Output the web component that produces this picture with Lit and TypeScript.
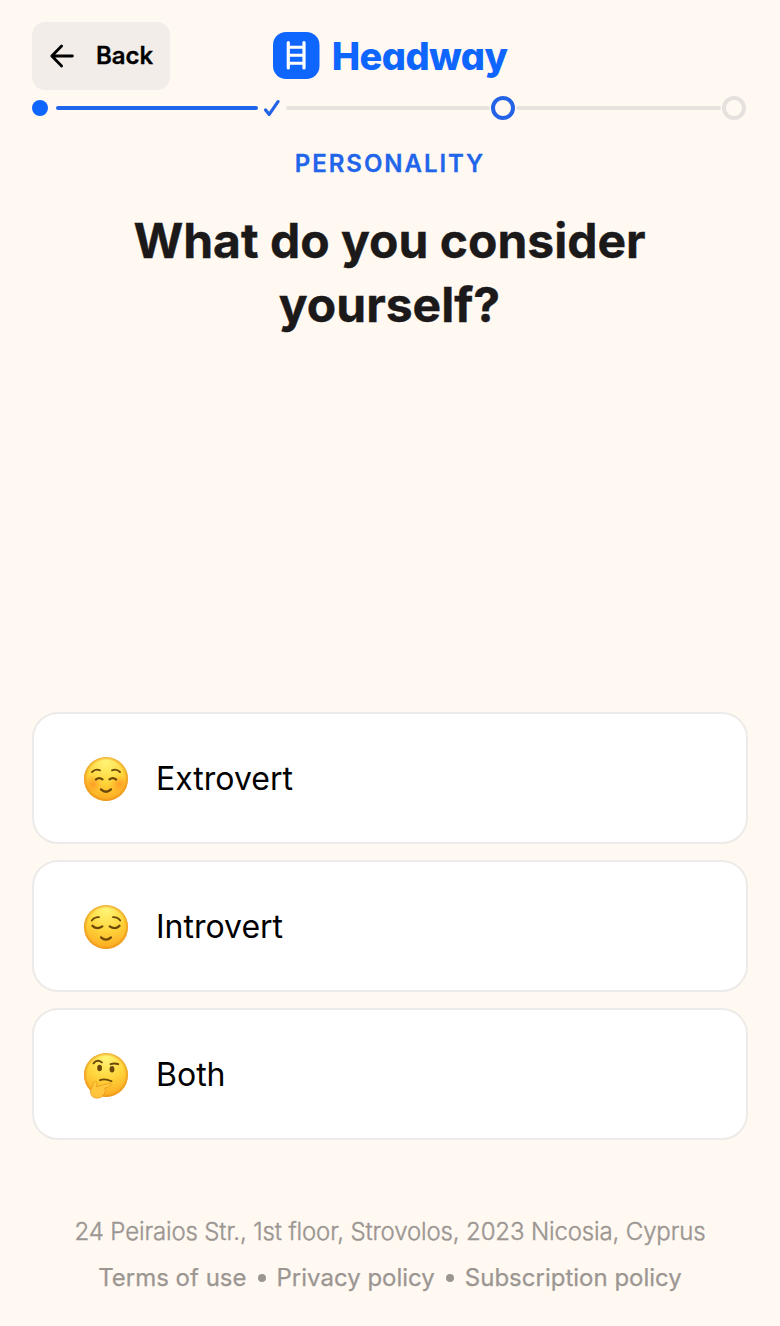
import { LitElement, html, css, svg } from "lit";
import { customElement, property } from "lit/decorators.js";

type Mood = "smile" | "relieved" | "thinking";

const faces = {
  smile: svg`
    <circle cx="9" cy="27" r="9" fill="url(#blush)" />
    <circle cx="35" cy="27" r="9" fill="url(#blush)" />
    <g fill="none" stroke="#6b4708" stroke-linecap="round">
      <path d="M8 15Q11.5 11.4 16 13.3M28 13.3Q32.5 11.4 36 15" stroke-width="1.8" />
      <path d="M11.8 22.6Q15 19.6 18.5 22.4M25.5 22.4Q29 19.6 32.2 22.6" stroke-width="2.2" />
      <path d="M17 32.4Q22 37 27 32.4" stroke-width="2.3" />
    </g>`,
  relieved: svg`
    <g fill="none" stroke="#6b4708" stroke-linecap="round">
      <path d="M7.8 15.5Q10.3 12 15 12.2M29 12.2Q33.7 12 36.2 15.5" stroke-width="1.8" />
      <path d="M8.5 20.8Q13 25 18.3 21.4M25.7 21.4Q31 25 35.5 20.8" stroke-width="2.3" />
      <path d="M17 32.4Q22 36.8 27 32.4" stroke-width="2.3" />
    </g>`,
  thinking: svg`
    <g fill="none" stroke="#6b4708" stroke-linecap="round">
      <path d="M9.5 10.4Q13 5.8 18 9.4" stroke-width="1.8" />
      <path d="M26.5 11.2Q30.5 9.8 34.3 11.2" stroke-width="1.8" />
      <path d="M16 27.2Q21 25.2 27.5 28.3" stroke-width="1.8" />
    </g>
    <ellipse cx="15.6" cy="15" rx="2.4" ry="3.2" fill="#6b4708" />
    <ellipse cx="28" cy="16.3" rx="2.4" ry="3.2" fill="#6b4708" />
    <path d="M9.5 29.5C11 27.4 13.5 28.8 12.8 31.2L12.3 33.8L24.5 30.5C27.5 29.7 28 32.2 25.5 33.2L20.5 35.3C22.5 36 22 38 20.7 38.6C21 40.5 20.2 41.2 19.2 41.7C18 45 14 45.6 10.5 44.7C6.8 43.7 6 40 7 36.5Z"
      fill="url(#hand)" stroke="#e8951c" stroke-width="0.7" />`,
};

@customElement("mood-icon")
export class MoodIcon extends LitElement {
  @property() mood: Mood = "smile";

  static styles = css`
    :host { display: block; width: 46px; height: 46px; }
    svg { display: block; overflow: visible; }
  `;

  render() {
    return html`<svg width="46" height="46" viewBox="-1 -1 46 46" aria-hidden="true">
      <defs>
        <radialGradient id="skin" cx="0.5" cy="0.12" r="0.92">
          <stop offset="0" stop-color="#fff576" />
          <stop offset="0.5" stop-color="#ffd53c" />
          <stop offset="1" stop-color="#fba51c" />
        </radialGradient>
        <radialGradient id="rim">
          <stop offset="0.85" stop-color="#e88d12" stop-opacity="0" />
          <stop offset="1" stop-color="#e38a1b" stop-opacity="0.7" />
        </radialGradient>
        <radialGradient id="blush">
          <stop offset="0" stop-color="#ff7b1a" stop-opacity="0.55" />
          <stop offset="1" stop-color="#ff8a1a" stop-opacity="0" />
        </radialGradient>
        <linearGradient id="hand" x1="0" y1="0" x2="0" y2="1">
          <stop offset="0" stop-color="#ffcb40" />
          <stop offset="1" stop-color="#ffc23a" />
        </linearGradient>
        <clipPath id="head"><circle cx="22" cy="22" r="22" /></clipPath>
      </defs>
      <circle cx="22" cy="22" r="22" fill="url(#skin)" />
      <circle cx="22" cy="22" r="22" fill="url(#rim)" />
      <g clip-path=${this.mood === "smile" ? "url(#head)" : "none"}>${faces[this.mood]}</g>
    </svg>`;
  }
}

@customElement("option-card")
export class OptionCard extends LitElement {
  @property() mood: Mood = "smile";
  @property() label = "";

  static styles = css`
    :host { display: block; }
    .card {
      box-sizing: border-box;
      width: 100%;
      height: 132px;
      display: flex;
      align-items: center;
      gap: 27px;
      padding: 2px 49px 0;
      border: 2px solid #edebe9;
      border-radius: 26px;
      background: #fff;
      color: #000;
      font: 400 32px/40px Inter, sans-serif;
      text-align: left;
    }
  `;

  render() {
    return html`<button class="card">
      <mood-icon .mood=${this.mood}></mood-icon>
      <span>${this.label}</span>
    </button>`;
  }
}

@customElement("app-root")
export class AppRoot extends LitElement {
  static styles = css`
    :host {
      display: block;
      font-family: Inter, sans-serif;
      background: #fff9f2;
    }
    .page {
      box-sizing: border-box;
      height: 1326px;
      padding: 22px 32px 31px;
      display: flex;
      flex-direction: column;
    }
    .header {
      display: grid;
      grid-template-columns: 1fr auto 1fr;
      align-items: center;
      height: 68px;
    }
    .back {
      justify-self: start;
      box-sizing: border-box;
      width: 138px;
      height: 68px;
      display: flex;
      align-items: center;
      gap: 21px;
      padding: 0 0 0 17px;
      border: 0;
      border-radius: 13px;
      background: #f2ede9;
      color: #000;
      font: 600 24px/32px Inter, sans-serif;
      -webkit-text-stroke: 0.3px;
    }
    .brand {
      display: flex;
      align-items: center;
      gap: 12px;
      color: #0f66ff;
    }
    .brand svg { margin-bottom: 2px; }
    .wordmark {
      font-size: 38px;
      line-height: 46px;
      font-weight: 800;
      letter-spacing: -0.6px;
      font-feature-settings: "cv11";
    }
    .progress {
      display: flex;
      align-items: center;
      height: 24px;
      margin: 6px 2px 0 0;
    }
    .dot { width: 16px; height: 16px; border-radius: 50%; background: #0f66ff; }
    .line { height: 4px; border-radius: 2px; background: #e8e3de; }
    .line.done { width: 202px; background: #1f64ec; margin: 0 5px 0 8px; }
    .line.next { flex: 1; margin: 0 1px 0 6px; }
    .line.last { width: 205px; margin: 0 1px; }
    .ring {
      box-sizing: border-box;
      width: 24px;
      height: 24px;
      border: 4px solid #e6e1dc;
      border-radius: 50%;
    }
    .ring.current { border-color: #2463e6; }
    svg { display: block; flex: none; }
    .topic {
      margin: 28px 0 0;
      font-size: 24px;
      line-height: 32px;
      font-weight: 600;
      letter-spacing: 1.95px;
      text-align: center;
      color: #2165ea;
      -webkit-text-stroke: 0.3px;
    }
    .title {
      margin: 29px 1px 0 0;
      font-size: 48px;
      line-height: 64px;
      font-weight: 700;
      text-align: center;
      color: #1b1919;
      -webkit-text-stroke: 0.4px;
    }
    .options {
      display: flex;
      flex-direction: column;
      gap: 16px;
      margin-top: auto;
    }
    .footer {
      margin-top: 75px;
      text-align: center;
      color: #9c9692;
      font-size: 24px;
      line-height: 34px;
    }
    .address {
      height: 34px;
      font-weight: 300;
      letter-spacing: -0.14px;
      white-space: nowrap;
      -webkit-text-stroke: 0.4px;
    }
    .links {
      display: flex;
      justify-content: center;
      align-items: center;
      gap: 11px;
      margin-top: 12px;
      height: 34px;
      white-space: nowrap;
      -webkit-text-stroke: 0.25px;
    }
    .sep { width: 8px; height: 8px; border-radius: 50%; background: #9c9692; }
  `;

  render() {
    return html`<main class="page">
      <header class="header">
        <button class="back">
          <svg width="26" height="26" viewBox="0 0 26 26" fill="none" stroke="#000" stroke-width="2.8"
            stroke-linecap="round" stroke-linejoin="round">
            <path d="M23.4 13H3M12.6 3L2.8 13L12.6 23" />
          </svg>
          <span>Back</span>
        </button>
        <div class="brand">
          <svg width="47" height="47" viewBox="0 0 47 47" fill="none">
            <rect width="46.5" height="47" rx="13" fill="#0f66ff" />
            <path d="M15.3 10.5V36M31 10.5V36" stroke="#fff" stroke-width="3.2" stroke-linecap="round" />
            <path d="M15.3 15.3H31M15.3 23.2H31M15.3 31.2H31" stroke="#fff" stroke-width="3" />
          </svg>
          <span class="wordmark">Headway</span>
        </div>
      </header>
      <div class="progress">
        <span class="dot"></span>
        <span class="line done"></span>
        <svg width="17" height="18" viewBox="0 0 17 18" fill="none" stroke="#2463e6" stroke-width="3.2"
          stroke-linecap="round" stroke-linejoin="round">
          <path d="M2.6 11L6.2 15.4L15 2.6" />
        </svg>
        <span class="line next"></span>
        <span class="ring current"></span>
        <span class="line last"></span>
        <span class="ring"></span>
      </div>
      <p class="topic">PERSONALITY</p>
      <h1 class="title">What do you consider<br />yourself?</h1>
      <section class="options">
        <option-card mood="smile" label="Extrovert"></option-card>
        <option-card mood="relieved" label="Introvert"></option-card>
        <option-card mood="thinking" label="Both"></option-card>
      </section>
      <footer class="footer">
        <div class="address">24 Peiraios Str., 1st floor, Strovolos, 2023 Nicosia, Cyprus</div>
        <div class="links">
          <span>Terms of use</span><i class="sep"></i><span>Privacy policy</span><i class="sep"></i><span>Subscription policy</span>
        </div>
      </footer>
    </main>`;
  }
}
